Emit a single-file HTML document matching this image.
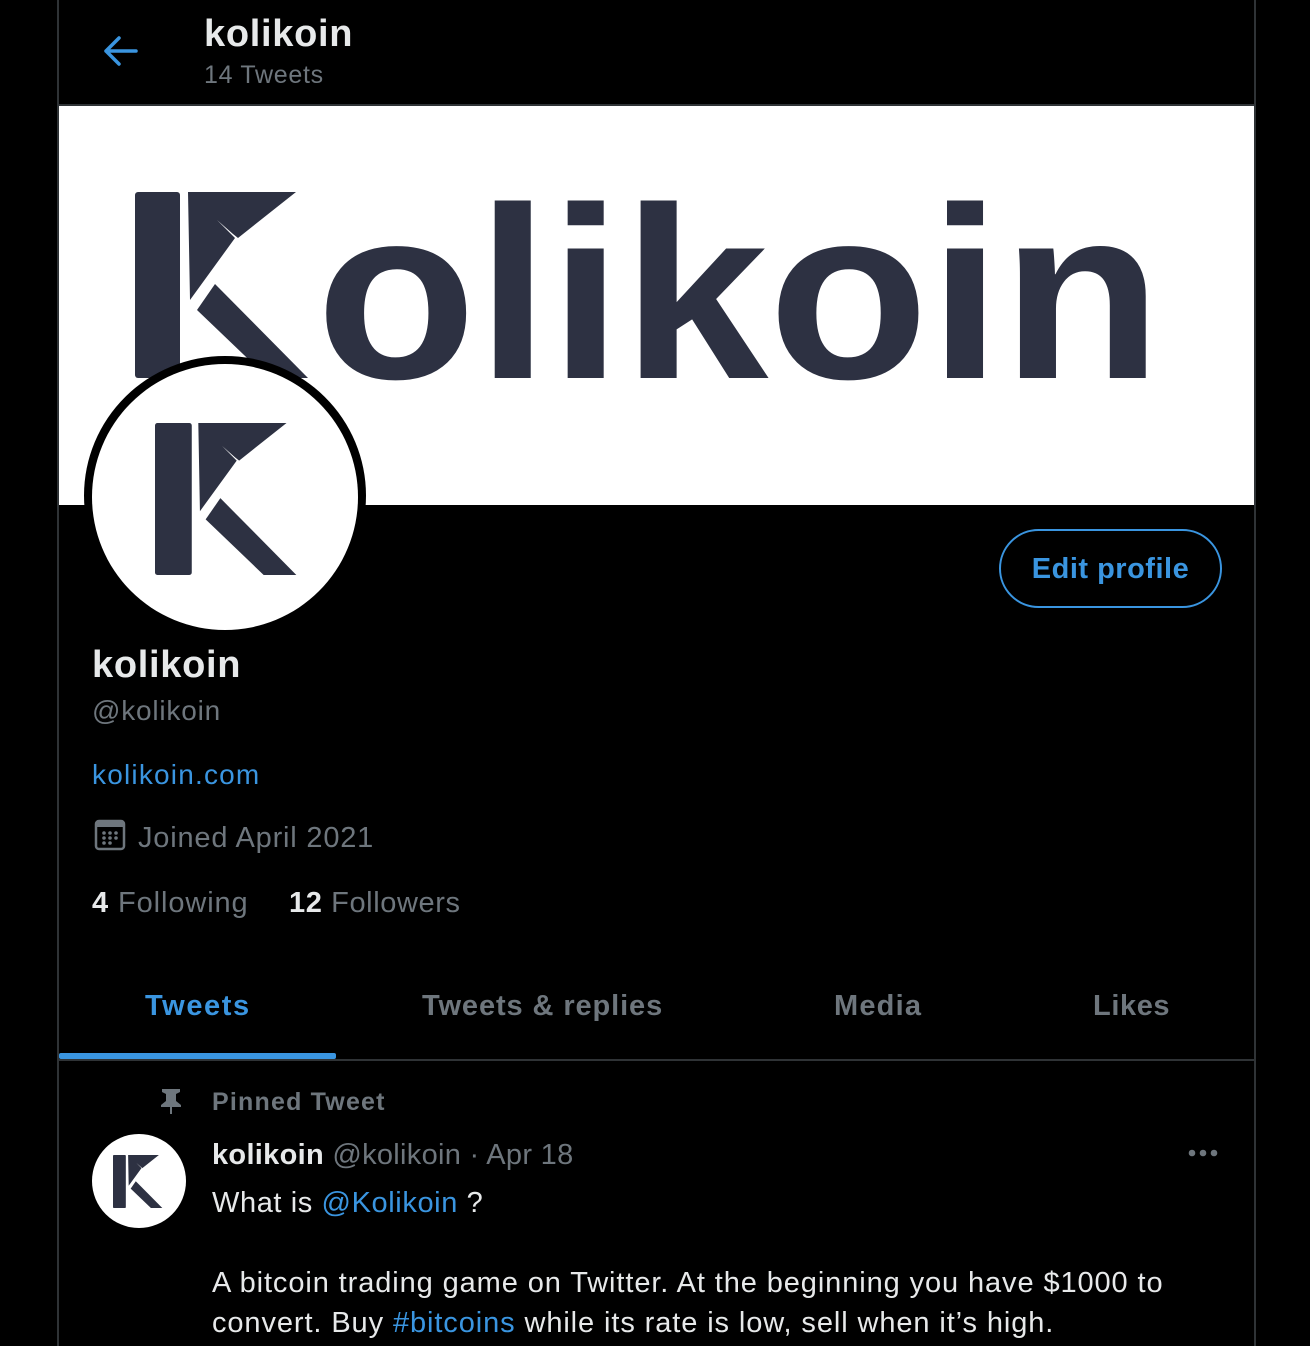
<!DOCTYPE html>
<html><head><meta charset="utf-8">
<style>
*{margin:0;padding:0;box-sizing:border-box}
body{width:1310px;height:1346px;background:#000;font-family:"Liberation Sans",sans-serif;position:relative;overflow:hidden;color:#d9d9d9}
.a{position:absolute;white-space:nowrap}
.vl{position:absolute;top:0;width:2px;height:1346px;background:#2f3336}
.g{color:#6e767d}
.b{color:#3a95e0}
</style></head><body>
<svg width="0" height="0" style="position:absolute"><defs>
<g id="K" fill="#2d3142">
<rect x="0" y="0" width="45" height="186" rx="3"/>
<path d="M53 0 L161 0 L103 46 L98 42 L82 28 L100 46 L55 108 Z"/>
<path d="M62 118 L80 92 L173 186 L133 186 Z"/>
</g></defs></svg>
<div class="vl" style="left:57px"></div>
<div class="vl" style="left:1254px"></div>
<svg class="a" style="left:100px;top:34px" width="40" height="34" viewBox="0 0 40 34"><path d="M36 17H6M19 4L6 17l13 13" stroke="#3a95e0" stroke-width="3.5" fill="none" stroke-linecap="round" stroke-linejoin="round"/></svg>
<div class="a" style="left:204px;top:13px;font-size:38px;font-weight:bold;color:#e7e9ea;letter-spacing:0.7px">kolikoin</div>
<div class="a g" style="left:204px;top:61px;font-size:25px;letter-spacing:0.7px">14 Tweets</div>
<div class="a" style="left:58px;top:104px;width:1197px;height:2px;background:#2f3336"></div>
<div class="a" style="left:59px;top:106px;width:1195px;height:399px;background:#fff;overflow:hidden">
<svg width="1195" height="399" style="position:absolute;left:0;top:0">
<use href="#K" transform="translate(76,86)"/>
<text x="257" y="272" font-family="Liberation Sans" font-weight="bold" font-size="245" fill="#2d3142" textLength="846" lengthAdjust="spacingAndGlyphs">olikoin</text>
</svg></div>
<div class="a" style="left:84px;top:356px;width:282px;height:279px;border-radius:50%;background:#000"></div>
<div class="a" style="left:92px;top:364px;width:266px;height:266px;border-radius:50%;background:#fff;overflow:hidden">
<svg width="266" height="266"><use href="#K" transform="translate(63,59) scale(0.817)"/></svg></div>
<div class="a" style="left:999px;top:529px;width:223px;height:79px;border:2px solid #3a95e0;border-radius:40px;color:#3a95e0;font-weight:bold;font-size:29px;text-align:center;line-height:77px;letter-spacing:0.5px">Edit profile</div>
<div class="a" style="left:92px;top:644px;font-size:38px;font-weight:bold;color:#e7e9ea;letter-spacing:0.7px">kolikoin</div>
<div class="a g" style="left:92px;top:695px;font-size:28px;letter-spacing:0.8px">@kolikoin</div>
<div class="a b" style="left:92px;top:759px;font-size:28px;letter-spacing:1.2px">kolikoin.com</div>
<svg class="a" style="left:94px;top:819px" width="32" height="32" viewBox="0 0 32 32"><rect x="2" y="2" width="28" height="28" rx="3" fill="none" stroke="#6e767d" stroke-width="2.5"/><rect x="2" y="2" width="28" height="6" fill="#6e767d"/><g fill="#6e767d"><circle cx="10" cy="14" r="1.8"/><circle cx="16" cy="14" r="1.8"/><circle cx="22" cy="14" r="1.8"/><circle cx="10" cy="19" r="1.8"/><circle cx="16" cy="19" r="1.8"/><circle cx="22" cy="19" r="1.8"/><circle cx="10" cy="24" r="1.8"/><circle cx="16" cy="24" r="1.8"/></g></svg>
<div class="a g" style="left:138px;top:822px;font-size:29px;letter-spacing:0.8px">Joined April 2021</div>
<div class="a g" style="left:92px;top:887px;font-size:29px;letter-spacing:0.9px"><b style="color:#e7e9ea">4</b> Following</div>
<div class="a g" style="left:289px;top:887px;font-size:29px;letter-spacing:0.6px"><b style="color:#e7e9ea">12</b> Followers</div>
<div class="a" style="left:145px;top:990px;font-size:29px;font-weight:bold;color:#3a95e0;letter-spacing:1.6px">Tweets</div>
<div class="a g" style="left:422px;top:990px;font-size:29px;font-weight:bold;letter-spacing:0.9px">Tweets &amp; replies</div>
<div class="a g" style="left:834px;top:990px;font-size:29px;font-weight:bold;letter-spacing:1.2px">Media</div>
<div class="a g" style="left:1093px;top:990px;font-size:29px;font-weight:bold;letter-spacing:0.6px">Likes</div>
<div class="a" style="left:59px;top:1053px;width:277px;height:6px;background:#3a95e0;border-radius:2px"></div>
<div class="a" style="left:58px;top:1059px;width:1197px;height:2px;background:#2f3336"></div>
<svg class="a" style="left:158px;top:1087px" width="26" height="28" viewBox="0 0 26 28"><path d="M4 2h18v3l-4 2v7l5 4v2H3v-2l5-4V7L4 5z M12 20h2v7h-2z" fill="#6e767d"/></svg>
<div class="a g" style="left:212px;top:1088px;font-size:25px;font-weight:bold;letter-spacing:1.2px">Pinned Tweet</div>
<div class="a" style="left:92px;top:1134px;width:94px;height:94px;border-radius:50%;background:#fff;overflow:hidden">
<svg width="94" height="94"><use href="#K" transform="translate(21,21) scale(0.285)"/></svg></div>
<div class="a g" style="left:212px;top:1139px;font-size:29px;letter-spacing:0.3px"><b style="color:#e7e9ea">kolikoin</b> @kolikoin · Apr 18</div>
<svg class="a" style="left:1186px;top:1145px" width="36" height="16"><g fill="#6e767d"><circle cx="6" cy="8" r="3.3"/><circle cx="17" cy="8" r="3.3"/><circle cx="28" cy="8" r="3.3"/></g></svg>
<div class="a" style="left:212px;top:1187px;font-size:29px;color:#e7e9ea;letter-spacing:0.6px">What is <span class="b">@Kolikoin</span> ?</div>
<div class="a" style="left:212px;top:1267px;font-size:29px;color:#e7e9ea;letter-spacing:0.9px">A bitcoin trading game on Twitter. At the beginning you have $1000 to</div>
<div class="a" style="left:212px;top:1307px;font-size:29px;color:#e7e9ea;letter-spacing:0.9px">convert. Buy <span class="b">#bitcoins</span> while its rate is low, sell when it’s high.</div>
</body></html>
